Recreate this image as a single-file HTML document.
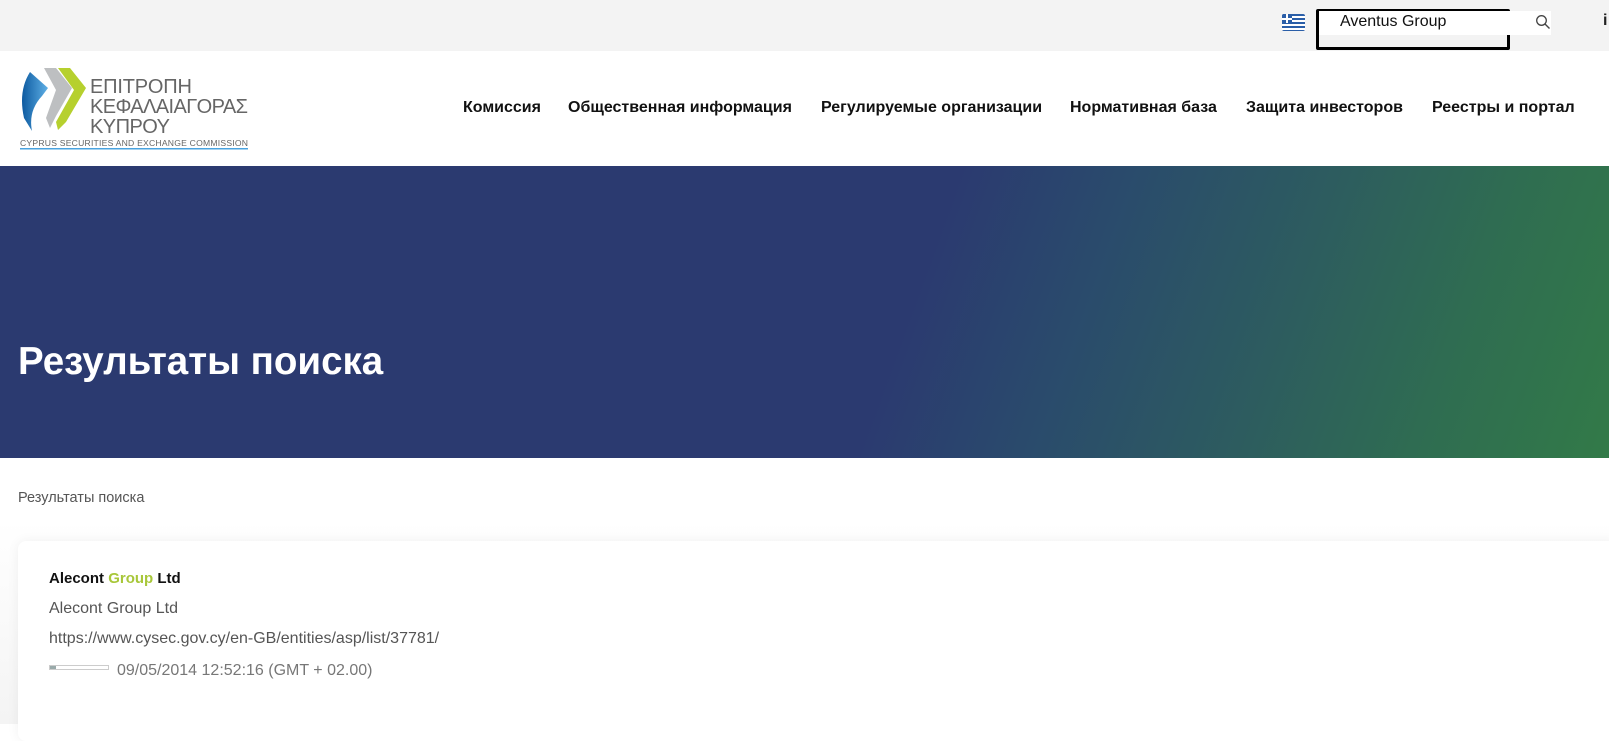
<!DOCTYPE html>
<html><head><meta charset="utf-8"><style>
*{margin:0;padding:0;box-sizing:border-box}
body{width:1609px;height:724px;overflow:hidden;background:#fff;font-family:"Liberation Sans",Arial,sans-serif;position:relative}
.top{position:absolute;left:0;top:0;width:1609px;height:51px;background:#f3f3f3}
.flag{position:absolute;left:1282px;top:14px;width:23px;height:17px;border-radius:2px;background:repeating-linear-gradient(#2a5ea8 0 2px,#fff 2px 4px);overflow:hidden}
.flag i{position:absolute;left:0;top:0;width:10px;height:9px;background:#2a5ea8}
.flag i:before{content:"";position:absolute;left:4px;top:0;width:2px;height:9px;background:#fff}
.flag i:after{content:"";position:absolute;left:0;top:4px;width:10px;height:2px;background:#fff}
.sbox{position:absolute;left:1316px;top:9px;width:194px;height:41px;border:3px solid #000;border-radius:2px;background:#f3f3f3}
.sin{position:absolute;left:1319px;top:11px;width:232px;height:24px;background:#fff}
.stext{position:absolute;left:1340px;top:13px;font-size:16px;color:#111}
.mag{position:absolute;left:1535px;top:14px}
.idot{position:absolute;left:1603px;top:12px;font-size:16px;font-weight:bold;color:#222}
.logo{position:absolute;left:18px;top:66px}
.nav span{position:absolute;top:99px;font-size:16px;font-weight:bold;color:#111;white-space:nowrap}
.banner{position:absolute;left:0;top:166px;width:1609px;height:292px;background:linear-gradient(110deg,#2b3a70 0%,#2b3a70 56%,#2a4b6c 66%,#2d5c5f 78%,#2f6d51 89%,#327a48 100%)}
.banner h1{position:absolute;left:18px;top:174px;color:#fff;font-size:38.5px;font-weight:bold}
.crumb{position:absolute;left:18px;top:490px;font-size:14.5px;color:#555}
.bgsh{position:absolute;left:0;top:520px;width:1609px;height:204px;background:linear-gradient(180deg,#fff,#f4f4f4)}
.card{position:absolute;left:18px;top:541px;width:1600px;height:200px;background:#fff;border-radius:8px;box-shadow:0 0 12px rgba(0,0,0,.06)}
.t1{position:absolute;left:49px;top:570px;font-size:15px;font-weight:bold;color:#111}
.t1 b{color:#a8c73a}
.t2{position:absolute;left:49px;top:600px;font-size:16px;color:#555}
.t3{position:absolute;left:49px;top:630px;font-size:16px;color:#555}
.bar{position:absolute;left:49px;top:665px;width:60px;height:5px;border:1px solid #ccc}
.bar i{position:absolute;left:0;top:0;width:6px;height:3px;background:#9aa}
.t4{position:absolute;left:117px;top:662px;font-size:16px;color:#777}
</style></head><body>
<div class="top"></div>
<div class="flag"><i></i></div>
<div class="sbox"></div>
<div class="sin"></div>
<div class="stext">Aventus Group</div>
<svg class="mag" width="16" height="16" viewBox="0 0 16 16"><circle cx="6.5" cy="6.5" r="4.8" fill="none" stroke="#444" stroke-width="1.3"/><path d="M10 10l4.5 4.5" stroke="#444" stroke-width="1.4"/></svg>
<div class="idot">i</div>
<svg class="logo" width="235" height="86" viewBox="0 0 235 86">
<defs><linearGradient id="b" x1="0" x2="1"><stop offset="0" stop-color="#0d5aa0"/><stop offset="1" stop-color="#5fb0e6"/></linearGradient></defs>
<path d="M12 6 Q0 25 6 52 L14 65 Q10 45 24 30 L30 22 Z" fill="url(#b)"/>
<path d="M26 2 L38 2 L54 22 L38 50 L32 62 L28 52 L38 24 Z" fill="#bdbfc1"/>
<path d="M40 2 L52 2 L68 22 L48 56 L40 64 L38 56 L56 24 Z" fill="#b6d02e"/>
<text x="72" y="27" font-family="Liberation Sans" font-size="20" fill="#666" textLength="102">ΕΠΙΤΡΟΠΗ</text>
<text x="72" y="47" font-family="Liberation Sans" font-size="20" fill="#666" textLength="158">ΚΕΦΑΛΑΙΑΓΟΡΑΣ</text>
<text x="72" y="67" font-family="Liberation Sans" font-size="20" fill="#666" textLength="80">ΚΥΠΡΟΥ</text>
<text x="2" y="80" font-family="Liberation Sans" font-size="8.6" fill="#666" textLength="228">CYPRUS SECURITIES AND EXCHANGE COMMISSION</text>
<rect x="2" y="82" width="228" height="1.5" fill="#4aa3df"/>
</svg>
<div class="nav"><span style="left:463px">Комиссия</span><span style="left:568px">Общественная информация</span><span style="left:821px">Регулируемые организации</span><span style="left:1070px">Нормативная база</span><span style="left:1246px">Защита инвесторов</span><span style="left:1432px">Реестры и портал</span></div>
<div class="banner"><h1>Результаты поиска</h1></div>
<div class="crumb">Результаты поиска</div>
<div class="bgsh"></div>
<div class="card"></div>
<div class="t1">Alecont <b>Group</b> Ltd</div>
<div class="t2">Alecont Group Ltd</div>
<div class="t3">https://www.cysec.gov.cy/en-GB/entities/asp/list/37781/</div>
<div class="bar"><i></i></div>
<div class="t4">09/05/2014 12:52:16 (GMT + 02.00)</div>
</body></html>
